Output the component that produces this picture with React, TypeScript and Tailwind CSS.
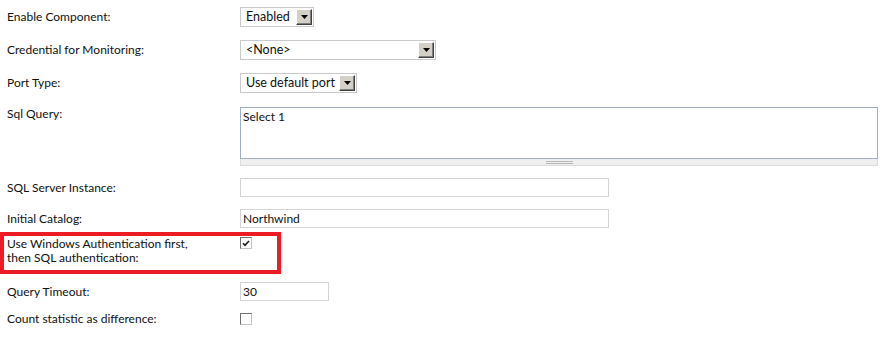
import type { ReactNode } from 'react';

function Arrow() {
  return (
    <div className="ml-auto mr-px flex h-[16px] w-[16px] shrink-0 items-center justify-center border border-t-white border-l-white border-r-[#404040] border-b-[#404040] bg-[#d4d0c8] shadow-[inset_-1px_-1px_0_#808080]">
      <svg width="7" height="4" viewBox="0 0 7 4">
        <path d="M0 0h7L3.5 4z" fill="#000" />
      </svg>
    </div>
  );
}

function Select({ value, width }: { value: string; width: string }) {
  return (
    <div className={`flex h-[20px] items-center border border-[#c9c9c9] bg-white pl-[5px] text-[12.5px] ${width}`}>
      <span className="whitespace-nowrap pr-[2px]">{value}</span>
      <Arrow />
    </div>
  );
}

function Input({ value, width }: { value?: string; width: string }) {
  return (
    <div className={`flex h-[19px] items-center border border-[#d4d4d4] bg-white pl-[2px] text-[12px] ${width}`}>
      {value}
    </div>
  );
}

function Checkbox({ checked }: { checked?: boolean }) {
  return (
    <div className="flex h-[12px] w-[12px] items-center justify-center border border-t-[#707070] border-l-[#707070] border-r-[#c4c4c4] border-b-[#c4c4c4] bg-white">
      {checked && (
        <svg width="8" height="7" viewBox="0 0 8 7">
          <path d="M1 3.2 L3 5.4 L7 1" stroke="#1a1a1a" strokeWidth="1.6" fill="none" />
        </svg>
      )}
    </div>
  );
}

function Row({ label, children, className = '' }: { label: string; children: ReactNode; className?: string }) {
  return (
    <div className={`flex items-center ${className}`}>
      <div className="w-[240px] shrink-0 pl-[7px] text-[12px] leading-[14px]">{label}</div>
      {children}
    </div>
  );
}

export default function App() {
  return (
    <div className="h-[339px] w-[892px] overflow-hidden bg-white pt-[7px] font-['Lato','Liberation_Sans',sans-serif] text-[#111]">
      <Row label="Enable Component:" className="h-[20px]">
        <Select value="Enabled" width="w-[74px]" />
      </Row>
      <Row label="Credential for Monitoring:" className="mt-[13px] h-[20px]">
        <Select value="<None>" width="w-[196px]" />
      </Row>
      <Row label="Port Type:" className="mt-[13px] h-[20px]">
        <Select value="Use default port" width="w-[117px]" />
      </Row>

      <div className="mt-[14px] flex items-start">
        <div className="w-[240px] shrink-0 pl-[7px] text-[12px] leading-[14px]">Sql Query:</div>
        <div className="flex w-[638px] flex-col">
          <div className="h-[52px] border border-[#9fb0c4] bg-white pl-[2px] pt-[2px] text-[12px] leading-[14px]">
            Select 1
          </div>
          <div className="flex h-[7px] items-center justify-center border-b border-r border-l border-[#dcdcdc] bg-[#efefef]">
            <div className="flex w-[27px] flex-col gap-[1px]">
              <div className="h-px bg-[#b8b8b8]" />
              <div className="h-px bg-[#b8b8b8]" />
            </div>
          </div>
        </div>
      </div>

      <Row label="SQL Server Instance:" className="mt-[12px] h-[19px]">
        <Input width="w-[369px]" />
      </Row>
      <Row label="Initial Catalog:" className="mt-[12px] h-[19px]">
        <Input value="Northwind" width="w-[369px]" />
      </Row>

      <div className="mt-[4px] flex h-[42px] w-[281px] items-start border-4 border-[#ec1c24] pt-[1px]">
        <div className="w-[236px] shrink-0 pl-[3px] text-[12px] leading-[14px]">
          Use Windows Authentication first,
          <br />
          then SQL authentication:
        </div>
        <Checkbox checked />
      </div>

      <Row label="Query Timeout:" className="mt-[8px] h-[19px]">
        <Input value="30" width="w-[89px]" />
      </Row>
      <Row label="Count statistic as difference:" className="mt-[11px] h-[14px]">
        <Checkbox />
      </Row>
    </div>
  );
}
